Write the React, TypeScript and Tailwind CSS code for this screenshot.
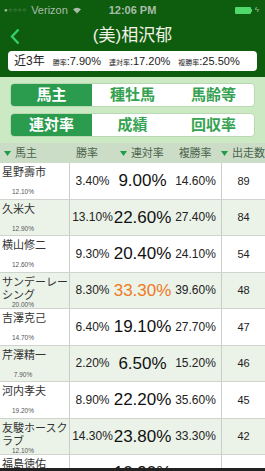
import React from "react";

const FONT = "font-['Liberation_Sans','Noto_Sans_CJK_JP',sans-serif]";

type Row = {
  name: string;
  sub: string;
  win: string;
  ren: string;
  fuku: string;
  runs: string;
  hot?: boolean;
};

const rows: Row[] = [
  { name: "星野壽市", sub: "12.10%", win: "3.40%", ren: "9.00%", fuku: "14.60%", runs: "89" },
  { name: "久米大", sub: "12.90%", win: "13.10%", ren: "22.60%", fuku: "27.40%", runs: "84" },
  { name: "横山修二", sub: "12.60%", win: "9.30%", ren: "20.40%", fuku: "24.10%", runs: "54" },
  { name: "サンデーレーシング", sub: "20.00%", win: "8.30%", ren: "33.30%", fuku: "39.60%", runs: "48", hot: true },
  { name: "吉澤克己", sub: "14.70%", win: "6.40%", ren: "19.10%", fuku: "27.70%", runs: "47" },
  { name: "芹澤精一", sub: "7.90%", win: "2.20%", ren: "6.50%", fuku: "15.20%", runs: "46" },
  { name: "河内孝夫", sub: "19.20%", win: "8.90%", ren: "22.20%", fuku: "35.60%", runs: "45" },
  { name: "友駿ホースクラブ", sub: "12.10%", win: "14.30%", ren: "23.80%", fuku: "33.30%", runs: "42" },
  { name: "福島徳佑", sub: "10.20%", win: "9.50%", ren: "10.90%", fuku: "17.50%", runs: "40" },
];

const Segments = ({ items }: { items: string[] }) => (
  <div className="flex h-[24px] rounded-[4px] border border-[#b9d8b3] overflow-hidden bg-white">
    {items.map((t, i) => (
      <div
        key={t}
        className={`flex-1 flex items-center justify-center text-[15px] font-bold ${
          i === 0 ? "bg-[#2b9b4d] text-white" : "text-[#35a251]"
        }`}
      >
        {t}
      </div>
    ))}
  </div>
);

const Tri = () => (
  <svg className="mr-[4px] shrink-0" width="7" height="5" viewBox="0 0 7 5">
    <path d="M0 0 H7 L3.5 5 Z" fill="#1f9d45" />
  </svg>
);

export default function App() {
  return (
    <div className={`w-[265px] h-[471px] overflow-hidden flex flex-col bg-white ${FONT}`}>
      {/* top bar */}
      <div className="bg-[#0e5d0e]">
        <div className="h-[20px] flex items-center px-[4px] text-[11px] text-[#a9bca9] relative">
          <span className="text-[6px] tracking-[1px]">●○○○○</span>
          <span className="ml-[4px]">Verizon</span>
          <svg className="ml-[4px]" width="10" height="8" viewBox="0 0 10 8">
            <path d="M5 7.5 L1 3.2 A6 6 0 0 1 9 3.2 Z" fill="#a9bca9" />
          </svg>
          <span className="absolute left-1/2 -translate-x-1/2 font-bold">12:06 PM</span>
          <div className="ml-auto flex items-center mr-[2px]">
            <div className="w-[16px] h-[7px] rounded-[1px] bg-[#4fd96a]" />
            <div className="w-[1px] h-[3px] bg-[#4fd96a]" />
            <span className="ml-[3px] text-[8px] text-[#a9bca9]">ϟ</span>
          </div>
        </div>
        <div className="h-[31px] grid grid-cols-[40px_1fr_40px] items-center">
          <div className="pl-[10px] pt-[1px]">
            <svg width="10" height="17" viewBox="0 0 10 17">
              <path d="M8.5 1.5 L2 8.5 L8.5 15.5" stroke="#34cf6b" strokeWidth="2.4" fill="none" />
            </svg>
          </div>
          <div className="text-center text-[17px] text-[#f2f2e6] leading-none">(美)相沢郁</div>
          <div />
        </div>
        <div className="mx-[8px] h-[20px] bg-white rounded-[4px] flex items-center pl-[6px] gap-[8px] text-[#222]">
          <span className="text-[12px]">近3年</span>
          <span className="text-[11px]">
            <span className="text-[7px]">勝率</span>:7.90%
          </span>
          <span className="text-[11px]">
            <span className="text-[7px]">連対率</span>:17.20%
          </span>
          <span className="text-[11px]">
            <span className="text-[7px]">複勝率</span>:25.50%
          </span>
        </div>
        <div className="h-[6px]" />
      </div>

      {/* segments */}
      <div className="bg-[#cbeac4] px-[10px] py-[6px] flex flex-col gap-[6px]">
        <Segments items={["馬主", "種牡馬", "馬齢等"]} />
        <Segments items={["連対率", "成績", "回収率"]} />
      </div>

      {/* header */}
      <div className="h-[20px] bg-[#cbdcc7] flex items-center text-[11px] text-[#4b634b] whitespace-nowrap">
        <div className="w-[70px] pl-[4px] flex items-center">
          <Tri />
          馬主
        </div>
        <div className="w-[45px] flex justify-center pr-[10px]">勝率</div>
        <div className="w-[55px] flex items-center justify-center">
          <Tri />
          連対率
        </div>
        <div className="w-[52px] flex justify-center">複勝率</div>
        <div className="flex-1 flex items-center justify-center">
          <Tri />
          出走数
        </div>
      </div>

      {/* rows */}
      <div className="flex-1 overflow-hidden">
        {rows.map((r, i) => (
          <div
            key={r.name}
            className={`h-[36.5px] flex border-b border-[#cfd4cf] ${
              i % 2 === 0 ? "bg-white" : "bg-[#ebf3e9]"
            }`}
          >
            <div className="w-[70px] border-r border-[#c9cec9] pl-[2px] pt-[3px] flex flex-col">
              <div className="text-[11px] leading-[13px] text-[#333]">{r.name}</div>
              <div className="w-[42px] text-center text-[6.5px] leading-none text-[#555] mt-auto mb-[3px]">
                {r.sub}
              </div>
            </div>
            <div className="w-[45px] flex items-center justify-center text-[12px] text-[#222] whitespace-nowrap">
              {r.win}
            </div>
            <div
              className={`w-[55px] flex items-center justify-center text-[17px] whitespace-nowrap ${
                r.hot ? "text-[#f0781e]" : "text-[#111]"
              }`}
            >
              {r.ren}
            </div>
            <div className="w-[52px] flex items-center justify-center text-[12px] text-[#222] whitespace-nowrap border-r border-[#c9cec9]">
              {r.fuku}
            </div>
            <div className="flex-1 flex items-center justify-center text-[11px] text-[#222]">{r.runs}</div>
          </div>
        ))}
      </div>
      <div className="h-[3px] bg-[#222]" />
    </div>
  );
}
